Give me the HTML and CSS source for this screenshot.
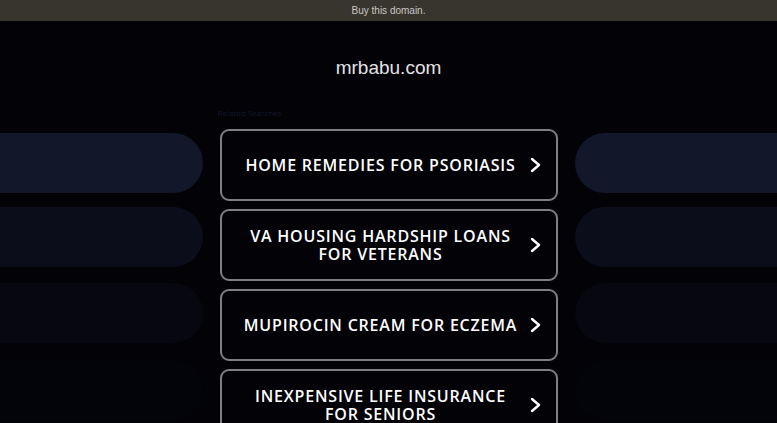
FILE: index.html
```html
<!DOCTYPE html>
<html lang="en">
<head>
  <meta charset="UTF-8" />
  <meta name="viewport" content="width=device-width, initial-scale=1.0"/>
  <title>mrbabu.com</title>
  <link rel="stylesheet" href="styles.css">
</head>
<body>

  <div class="topbar">Buy this domain.</div>

  <h1 class="domain">mrbabu.com</h1>

  <div class="layout">
    <div class="side side-left">
      <div class="pill p1"></div>
      <div class="pill p2"></div>
      <div class="pill p3"></div>
      <div class="pill p4"></div>
    </div>

    <div class="searches">
      <div class="label">Related Searches</div>
      <a class="card" href="#">
        <span class="card-text">HOME REMEDIES FOR PSORIASIS</span>
        <svg class="chev" viewBox="0 0 12 16"><polyline points="2,2 9,8 2,14"/></svg>
      </a>
      <a class="card" href="#">
        <span class="card-text">VA HOUSING HARDSHIP LOANS FOR VETERANS</span>
        <svg class="chev" viewBox="0 0 12 16"><polyline points="2,2 9,8 2,14"/></svg>
      </a>
      <a class="card" href="#">
        <span class="card-text">MUPIROCIN CREAM FOR ECZEMA</span>
        <svg class="chev" viewBox="0 0 12 16"><polyline points="2,2 9,8 2,14"/></svg>
      </a>
      <a class="card" href="#">
        <span class="card-text">INEXPENSIVE LIFE INSURANCE FOR SENIORS</span>
        <svg class="chev" viewBox="0 0 12 16"><polyline points="2,2 9,8 2,14"/></svg>
      </a>
    </div>

    <div class="side side-right">
      <div class="pill p1"></div>
      <div class="pill p2"></div>
      <div class="pill p3"></div>
      <div class="pill p4"></div>
    </div>
  </div>

</body>
</html>
```

FILE: styles.css
```css
body {
  margin: 0;
  padding: 0;
  background-color: #020207;
  font-family: "Liberation Sans", Arial, sans-serif;
  overflow: hidden;
}

.topbar {
  height: 21px;
  line-height: 21px;
  background-color: #38352f;
  color: #c9c7c2;
  font-size: 10px;
  text-align: center;
}

.domain {
  margin: 35px 0 0;
  height: 24px;
  line-height: 24px;
  font-size: 19px;
  font-weight: normal;
  color: #e2e2e2;
  text-align: center;
}

.layout {
  display: grid;
  grid-template-columns: 1fr 338px 1fr;
  column-gap: 17px;
  margin-top: 29px;
}

.side {
  display: flex;
  flex-direction: column;
  gap: 15px;
  padding-top: 24px;
}

.pill {
  height: 60px;
}

.side-left .pill {
  border-radius: 0 30px 30px 0;
}

.side-right .pill {
  border-radius: 30px 0 0 30px;
}

.pill.p2 { margin-top: -1px; }
.pill.p3 { margin-top: 1px; }
.pill.p4 { margin-top: 2px; }

.p1 { background-color: #13172a; }
.p2 { background-color: #0b0d1b; }
.p3 { background-color: #06070f; }
.p4 { background-color: #03040a; }

.searches {
  display: flex;
  flex-direction: column;
  gap: 8px;
}

.label {
  height: 8px;
  line-height: 8px;
  margin-left: -2px;
  margin-bottom: 4px;
  font-family: "Open Sans", sans-serif;
  font-size: 8px;
  color: #15182d;
}

.card {
  display: flex;
  align-items: center;
  box-sizing: border-box;
  height: 72px;
  padding: 0 14px 0 18px;
  border: 2px solid #7f7f7f;
  border-radius: 9px;
  text-decoration: none;
  color: #ffffff;
}

.card-text {
  flex: 1;
  text-align: center;
  font-family: "Open Sans", sans-serif;
  font-size: 16px;
  font-weight: 600;
  line-height: 18px;
  letter-spacing: 0.8px;
  padding: 0 8px 0 0;
}

.chev {
  width: 12px;
  height: 16px;
  flex-shrink: 0;
  fill: none;
  stroke: #ffffff;
  stroke-width: 2.4;
  stroke-linecap: round;
  stroke-linejoin: round;
}
```
